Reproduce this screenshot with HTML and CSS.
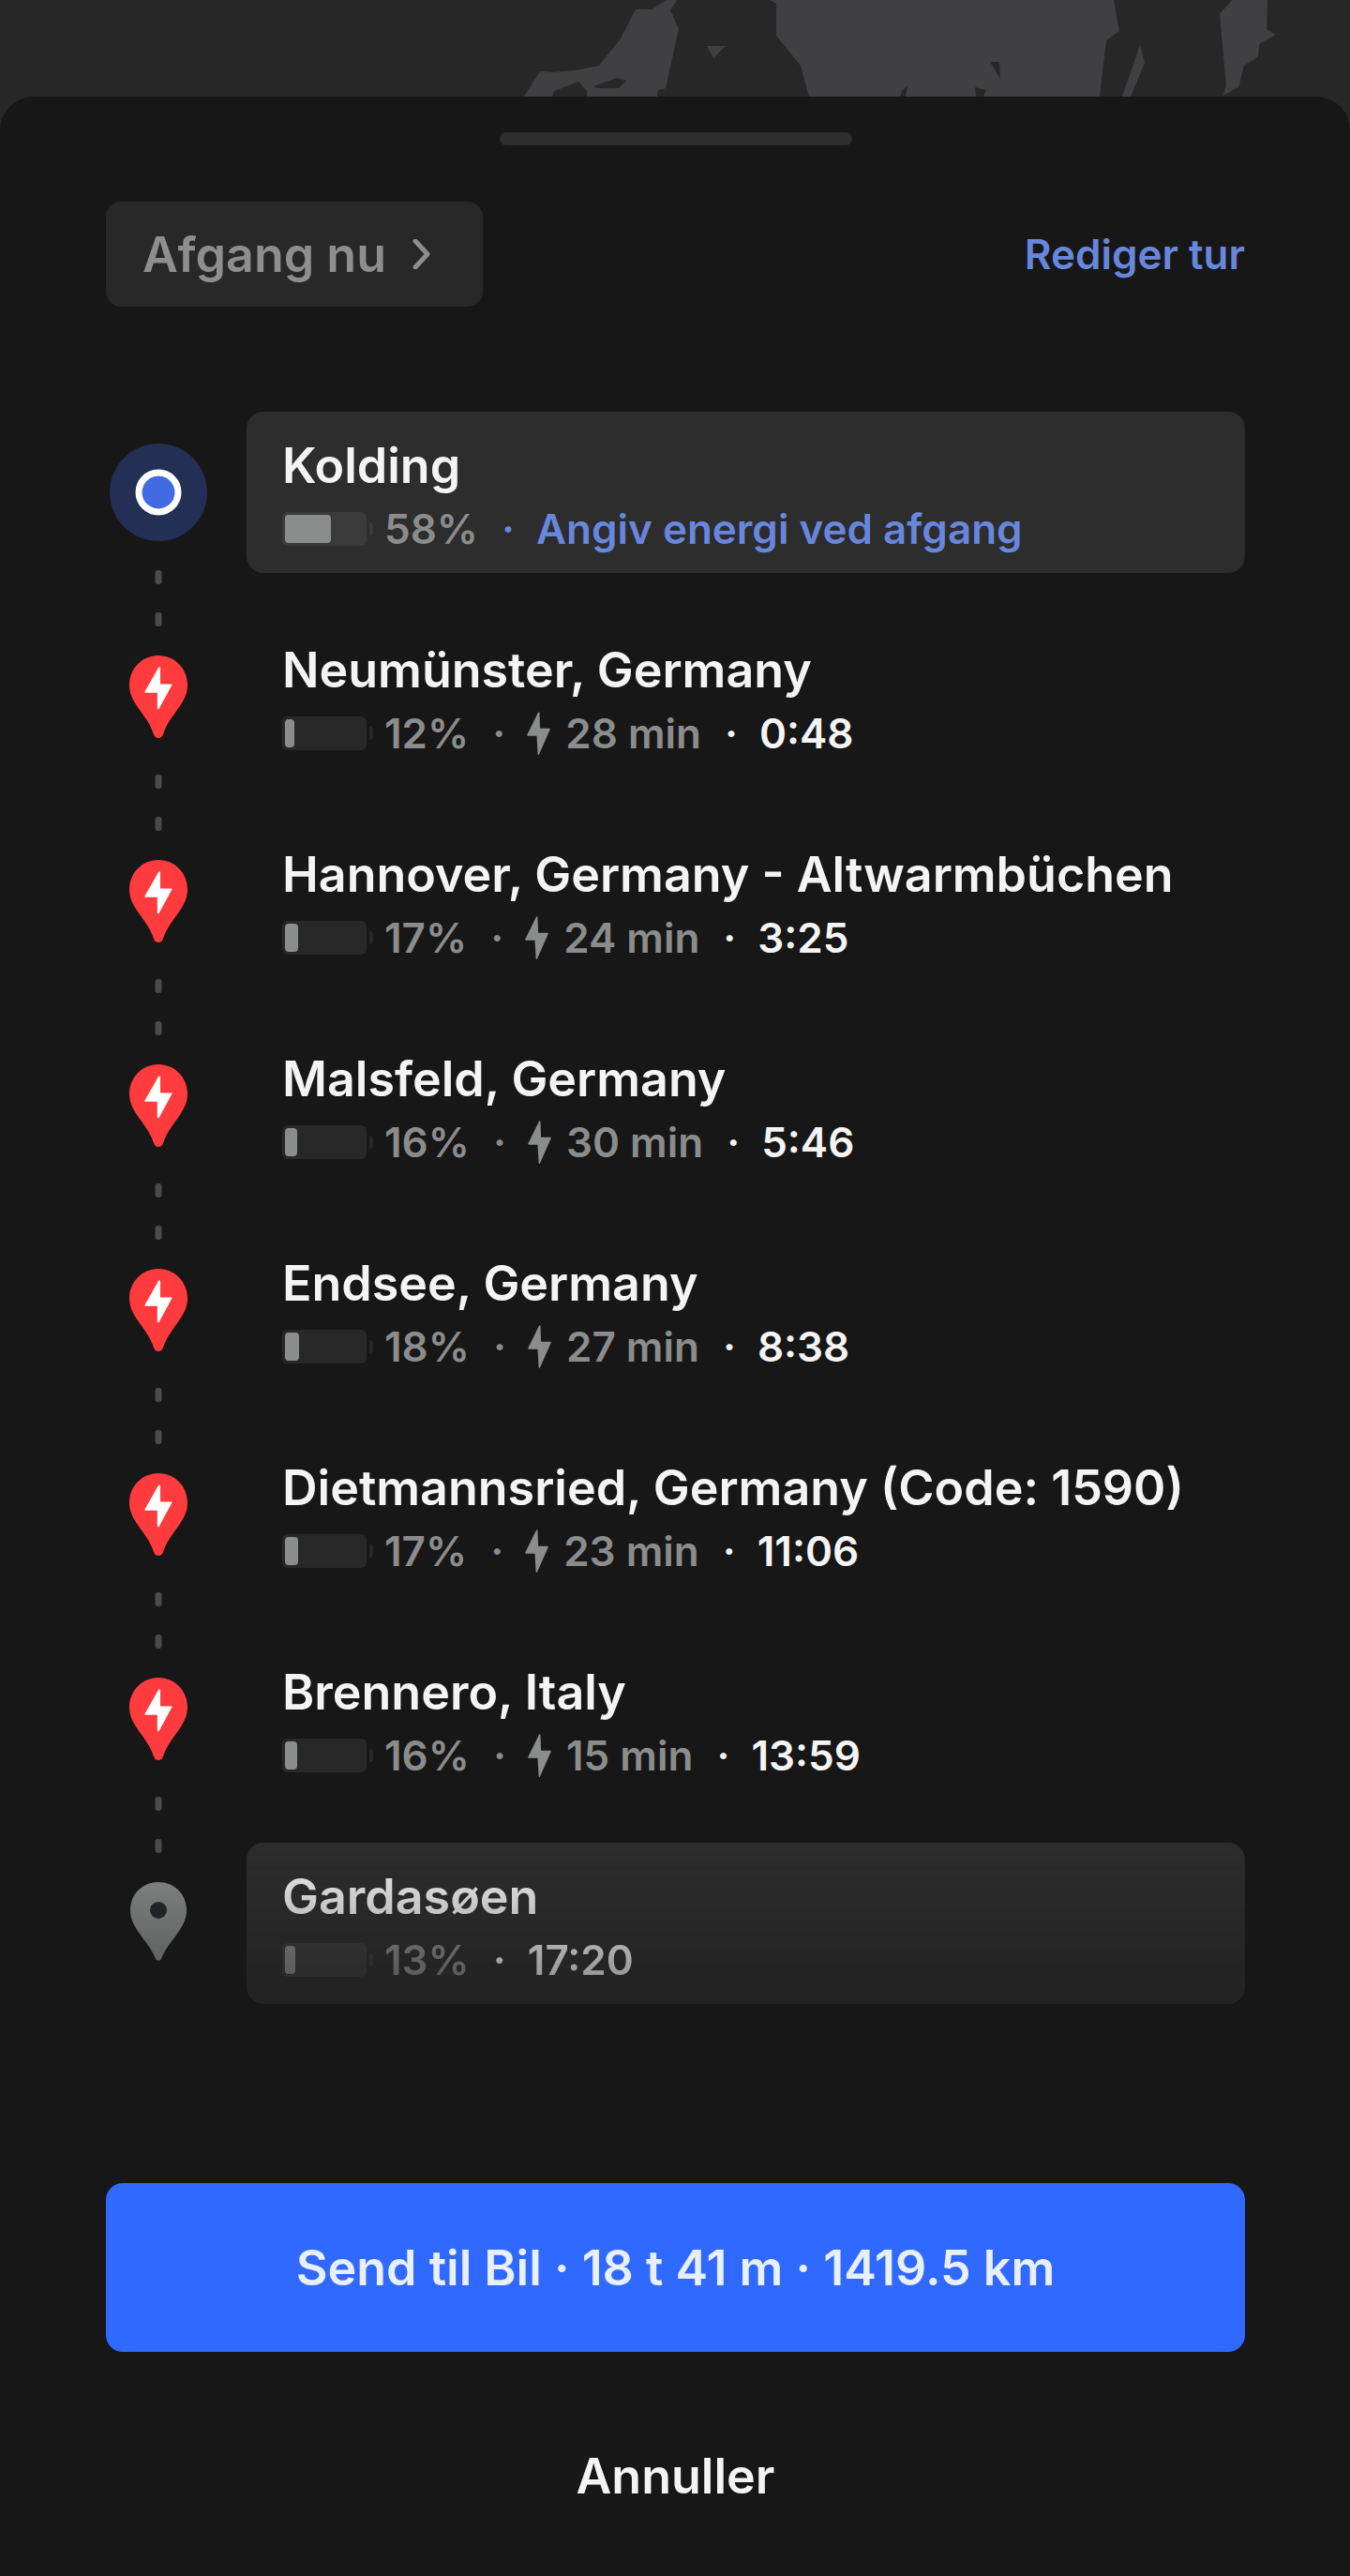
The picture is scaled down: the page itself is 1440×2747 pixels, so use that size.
FILE: index.html
```html
<!DOCTYPE html>
<html lang="da">
<head>
    <meta charset="utf-8">
    <meta name="viewport" content="width=device-width, initial-scale=1">
    <title>Rejseplan</title>
    <link rel="stylesheet" href="styles.css">
</head>
<body>
    <!-- shared icons -->
    <svg class="icon-defs" aria-hidden="true">
        <symbol id="charger-pin" viewBox="0 0 62 88">
            <path fill="#ff3b3d" d="M31 0C13.500 0 0 14 0 31.500c0 9 3.500 15.500 8.500 23C16 65.500 22 72 26 84c.8 2.600 2.600 4 5 4s4.200-1.400 5-4c4-12 10-18.500 17.500-29.500 5-7.500 8.500-14 8.500-23C62 14 48.500 0 31 0z"/>
            <path fill="#fff" d="M31 13 16.500 38.500c-.4.800 0 1.300.8 1.300h12.500V56c0 1.600 1.200 1.800 2 .5l13.500-24.700c.4-.8 0-1.300-.8-1.300H33V14c0-1.700-1.200-2.200-2-1z"/>
        </symbol>
        <symbol id="bolt" viewBox="0 0 25 46">
            <path fill="currentColor" d="M12 .8.300 24.500c-.4.800 0 1.300.8 1.300h9.400L11.600 45c.1 1.200 1 1.200 1.500.2L24.700 19c.3-.8 0-1.300-.8-1.300h-9.800L13.500 1.200C13.400 0 12.500-.2 12 .8z"/>
        </symbol>
        <symbol id="connector" viewBox="0 0 7 60">
            <rect width="7" height="15" rx="3" fill="#4b4b4c"/>
            <rect y="45" width="7" height="15" rx="3" fill="#4b4b4c"/>
        </symbol>
    </svg>

    <svg class="map" viewBox="0 0 1440 139" preserveAspectRatio="xMidYMin slice" aria-hidden="true">
        <g fill="#404042">
            <path d="M559 103 576 76 590 77 614 75 639 70 662 41 678 10H695L711 0H722L715 11 724 31 710 94 702 96 701 103V139H559z"/>
            <path d="M754 49H774L761 62z"/>
            <path d="M821 0 828 4V38L854 70 863 103V139H1173V103L1180 43 1194 33 1188 0z"/>
            <path d="M1197 103 1216 48 1221 67 1206 103z"/>
            <path d="M1314 0 1301 15 1308 92 1304 102 1321 93 1327 70 1342 60 1343 47 1361 37 1351 31 1352 0z"/>
        </g>
        <g fill="#272727">
            <path d="M589 103 591 97 617 87 626 97V103z"/>
            <path d="M633 92 658 83 668 86 660 94H638z"/>
            <path d="M960 103 962 97 968 91 966 103z"/>
            <path d="M1040 93 1052 96 1049 103H1041z"/>
            <path d="M1056 66H1066L1067 84z"/>
        </g>
    </svg>

    <main class="sheet">
        <div class="handle"></div>

        <div class="toolbar">
            <button class="departure-btn" type="button">
                Afgang nu
                <svg class="chevron" viewBox="0 0 20 32" aria-hidden="true">
                    <path d="M3 2 16 16 3 30" fill="none" stroke="currentColor" stroke-width="5" stroke-linecap="round" stroke-linejoin="round"/>
                </svg>
            </button>
            <a class="link" href="#">Rediger tur</a>
        </div>

        <ol class="stops">
            <li class="stop">
                <div class="rail">
                    <svg class="marker" viewBox="0 0 106 106" aria-hidden="true">
                        <circle cx="53" cy="53" r="52" fill="#232f55"/>
                        <circle cx="53" cy="53" r="21" fill="#416be2" stroke="#fff" stroke-width="7"/>
                    </svg>
                    <svg class="connector"><use href="#connector"/></svg>
                </div>
                <div class="stop-info card">
                    <h2>Kolding</h2>
                    <div class="meta">
                        <span class="battery"><span class="level" style="width: 58%"></span></span>
                        <span>58%</span>
                        <span class="dot link">·</span>
                        <a class="link" href="#">Angiv energi ved afgang</a>
                    </div>
                </div>
            </li>
            <li class="stop">
                <div class="rail">
                    <svg class="marker"><use href="#charger-pin" x="22" y="9" width="62" height="88"/></svg>
                    <svg class="connector"><use href="#connector"/></svg>
                </div>
                <div class="stop-info">
                    <h2>Neumünster, Germany</h2>
                    <div class="meta">
                        <span class="battery"><span class="level" style="width: 12%"></span></span>
                        <span>12%</span>
                        <span class="dot">·</span>
                        <svg class="bolt"><use href="#bolt"/></svg>
                        <span>28 min</span>
                        <span class="dot time">·</span>
                        <span class="time">0:48</span>
                    </div>
                </div>
            </li>
            <li class="stop">
                <div class="rail">
                    <svg class="marker"><use href="#charger-pin" x="22" y="9" width="62" height="88"/></svg>
                    <svg class="connector"><use href="#connector"/></svg>
                </div>
                <div class="stop-info">
                    <h2>Hannover, Germany - Altwarmbüchen</h2>
                    <div class="meta">
                        <span class="battery"><span class="level" style="width: 17%"></span></span>
                        <span>17%</span>
                        <span class="dot">·</span>
                        <svg class="bolt"><use href="#bolt"/></svg>
                        <span>24 min</span>
                        <span class="dot time">·</span>
                        <span class="time">3:25</span>
                    </div>
                </div>
            </li>
            <li class="stop">
                <div class="rail">
                    <svg class="marker"><use href="#charger-pin" x="22" y="9" width="62" height="88"/></svg>
                    <svg class="connector"><use href="#connector"/></svg>
                </div>
                <div class="stop-info">
                    <h2>Malsfeld, Germany</h2>
                    <div class="meta">
                        <span class="battery"><span class="level" style="width: 16%"></span></span>
                        <span>16%</span>
                        <span class="dot">·</span>
                        <svg class="bolt"><use href="#bolt"/></svg>
                        <span>30 min</span>
                        <span class="dot time">·</span>
                        <span class="time">5:46</span>
                    </div>
                </div>
            </li>
            <li class="stop">
                <div class="rail">
                    <svg class="marker"><use href="#charger-pin" x="22" y="9" width="62" height="88"/></svg>
                    <svg class="connector"><use href="#connector"/></svg>
                </div>
                <div class="stop-info">
                    <h2>Endsee, Germany</h2>
                    <div class="meta">
                        <span class="battery"><span class="level" style="width: 18%"></span></span>
                        <span>18%</span>
                        <span class="dot">·</span>
                        <svg class="bolt"><use href="#bolt"/></svg>
                        <span>27 min</span>
                        <span class="dot time">·</span>
                        <span class="time">8:38</span>
                    </div>
                </div>
            </li>
            <li class="stop">
                <div class="rail">
                    <svg class="marker"><use href="#charger-pin" x="22" y="9" width="62" height="88"/></svg>
                    <svg class="connector"><use href="#connector"/></svg>
                </div>
                <div class="stop-info">
                    <h2>Dietmannsried, Germany (Code: 1590)</h2>
                    <div class="meta">
                        <span class="battery"><span class="level" style="width: 17%"></span></span>
                        <span>17%</span>
                        <span class="dot">·</span>
                        <svg class="bolt"><use href="#bolt"/></svg>
                        <span>23 min</span>
                        <span class="dot time">·</span>
                        <span class="time">11:06</span>
                    </div>
                </div>
            </li>
            <li class="stop">
                <div class="rail">
                    <svg class="marker"><use href="#charger-pin" x="22" y="9" width="62" height="88"/></svg>
                    <svg class="connector"><use href="#connector"/></svg>
                </div>
                <div class="stop-info">
                    <h2>Brennero, Italy</h2>
                    <div class="meta">
                        <span class="battery"><span class="level" style="width: 16%"></span></span>
                        <span>16%</span>
                        <span class="dot">·</span>
                        <svg class="bolt"><use href="#bolt"/></svg>
                        <span>15 min</span>
                        <span class="dot time">·</span>
                        <span class="time">13:59</span>
                    </div>
                </div>
            </li>
            <li class="stop destination">
                <div class="rail">
                    <svg class="marker" viewBox="0 0 106 106" aria-hidden="true">
                        <path fill="#8b8d8d" d="M53 9C36 9 23 22 23 39c0 9 3.500 15.500 8.500 23C39 73 46 80 50 91c.8 2.200 5.200 2.200 6 0 4-11 11-18 18.500-29 5-7.500 8.500-14 8.500-23C83 22 70 9 53 9z"/>
                        <circle cx="53" cy="39" r="9" fill="#25272a"/>
                    </svg>
                </div>
                <div class="stop-info card">
                    <h2>Gardasøen</h2>
                    <div class="meta">
                        <span class="battery"><span class="level" style="width: 13%"></span></span>
                        <span>13%</span>
                        <span class="dot time">·</span>
                        <span class="time">17:20</span>
                    </div>
                </div>
            </li>
        </ol>

        <button class="send-btn" type="button">Send til Bil · 18 t 41 m · 1419.5 km</button>
        <button class="cancel-btn" type="button">Annuller</button>
    </main>
</body>
</html>
```

FILE: styles.css
```css
* {
    box-sizing: border-box;
}

body {
    margin: 0;
    background-color: #272727;
    color: #f4f4f4;
    font-family: Inter, "Liberation Sans", sans-serif;
    font-size: 52px;
    font-weight: 600;
}

button {
    font: inherit;
    border: none;
    padding: 0;
    cursor: pointer;
}

.icon-defs {
    display: none;
}

.map {
    display: block;
    width: 100%;
    height: 139px;
}

/* Bottom sheet, slides over the map */
.sheet {
    position: relative;
    display: flex;
    flex-direction: column;
    margin-top: -36px;
    padding: 38px 112px 51px 113px;
    background: #171717;
    border-radius: 36px 36px 0 0;
}

.handle {
    align-self: center;
    width: 376px;
    height: 14px;
    border-radius: 7px;
    background: #2d2d2d;
}

.toolbar {
    display: flex;
    justify-content: space-between;
    align-items: center;
    margin-top: 60px;
}

.departure-btn {
    display: flex;
    align-items: center;
    gap: 28px;
    height: 112px;
    padding: 0 55px 0 39px;
    border-radius: 16px;
    background: #282828;
    color: #8e8e8e;
}

.chevron {
    width: 20px;
    height: 32px;
}

.link {
    color: #6786dc;
    font-size: 44px;
    text-decoration: none;
}

/* Stop list */
.stops {
    list-style: none;
    margin: 112px 0 0;
    padding: 0;
}

.stop {
    display: flex;
    align-items: flex-start;
    gap: 38px;
}

.rail {
    display: flex;
    flex-direction: column;
    align-items: center;
    flex-shrink: 0;
    width: 112px;
    padding-top: 33px;
    margin-bottom: -11px;
}

.marker {
    width: 106px;
    height: 106px;
}

.connector {
    width: 8px;
    height: 60px;
    margin-top: 30px;
}

.stop-info {
    flex: 1;
    padding: 26px 38px 19px;
}

.stop-info h2 {
    margin: 0 0 7px;
    font-size: 52px;
    font-weight: 600;
    line-height: 64px;
    white-space: nowrap;
}

.card {
    border-radius: 18px;
    background: #2d2d2d;
}

.meta {
    display: flex;
    align-items: center;
    color: #8b8c8c;
    font-size: 44px;
    line-height: 56px;
    white-space: nowrap;
}

.battery {
    position: relative;
    width: 90px;
    height: 36px;
    padding: 3px;
    margin-right: 19px;
    border-radius: 6px;
    background: #282828;
}

.battery::after {
    content: "";
    position: absolute;
    left: 93px;
    top: 11px;
    width: 4px;
    height: 14px;
    border-radius: 0 4px 4px 0;
    background: #282828;
}

.card .battery,
.card .battery::after {
    background: #3b3b3b;
}

.level {
    display: block;
    height: 30px;
    border-radius: 4px;
    background: #8b8c8c;
}

.dot {
    width: 12px;
    margin: 0 25px;
    text-align: center;
}

.bolt {
    width: 25px;
    height: 46px;
    margin-right: 16px;
}

.time {
    color: #f4f4f4;
}

.destination {
    -webkit-mask-image: linear-gradient(#000, rgba(0, 0, 0, 0.5));
    mask-image: linear-gradient(#000, rgba(0, 0, 0, 0.5));
}

.send-btn {
    height: 180px;
    margin-top: 191px;
    border-radius: 18px;
    background: #3069ff;
    color: #e8efff;
}

.cancel-btn {
    align-self: center;
    height: 112px;
    margin-top: 76px;
    background: none;
    color: #f4f4f4;
}
```
